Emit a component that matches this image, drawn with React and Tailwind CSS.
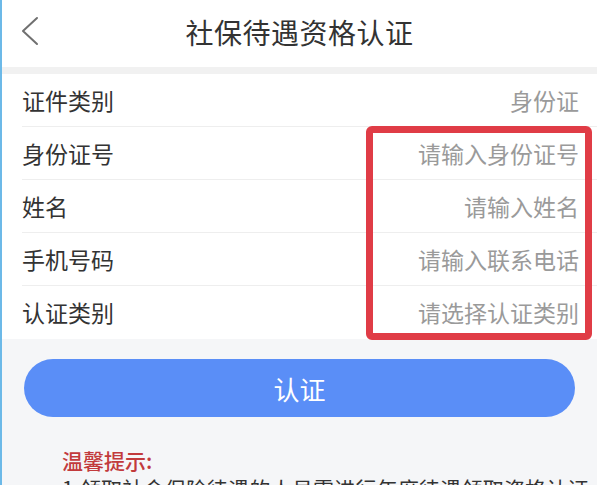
const rows = [
    { label: '证件类别', value: '身份证' },
    { label: '身份证号', value: '请输入身份证号' },
    { label: '姓名', value: '请输入姓名' },
    { label: '手机号码', value: '请输入联系电话' },
    { label: '认证类别', value: '请选择认证类别' },
];

export default function App() {
    return (
        <div
            className="h-[485px] overflow-hidden bg-[#f5f6f8] border-l-2 border-[#6cb9e8]"
            style={{ fontFamily: '"Noto Sans CJK SC", "Noto Sans", sans-serif' }}
        >
            {/* Header */}
            <div className="relative h-[67px] bg-white flex items-center justify-center pb-[4px]">
                <svg className="absolute left-[17px] top-[16px]" width="22" height="30" viewBox="0 0 22 30" fill="none">
                    <polyline points="18,2 4,15 18,28" stroke="#707070" strokeWidth="2" strokeLinecap="round" strokeLinejoin="round" />
                </svg>
                <h1 className="text-[28px] text-[#333] tracking-[0.5px]">社保待遇资格认证</h1>
            </div>
            <div className="h-[7px] bg-[#f1f1f1]" />

            {/* Form */}
            <div className="relative bg-white">
                {rows.map((row, i) => (
                    <div key={row.label} className="pl-[20px]">
                        <div
                            className={`h-[53px] flex items-center justify-between pr-[18px] ${i < rows.length - 1 ? 'border-b border-[#eeeeee]' : ''}`}
                        >
                            <span className="text-[23px] text-[#333]">{row.label}</span>
                            <span className="text-[23px] text-[#9a9a9a]">{row.value}</span>
                        </div>
                    </div>
                ))}
                {/* highlight */}
                <div className="absolute left-[364px] top-[52px] w-[226px] h-[214px] border-[7px] border-[#e03c46] rounded-[6px]" />
            </div>

            {/* Button */}
            <div className="px-[22px] pt-[20px]">
                <button className="w-full h-[58px] rounded-full bg-[#5a8ef7] text-white text-[26px]">
                    认证
                </button>
            </div>

            {/* Tips */}
            <div className="pl-[60px] pt-[29px] text-[21px] leading-[28px] whitespace-nowrap">
                <p className="text-[#c23a3c] font-medium">温馨提示:</p>
                <p className="text-[#333] tracking-[0.2px]">1.领取社会保险待遇的人员需进行年度待遇领取资格认证</p>
            </div>
        </div>
    );
}
